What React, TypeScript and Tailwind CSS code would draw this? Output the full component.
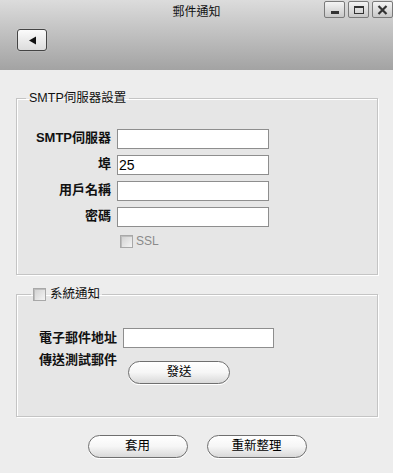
import React from "react";

const cjk = { fontFamily: '"Liberation Sans", "Noto Sans CJK TC", sans-serif' };

function Check() {
  return (
    <span className="inline-block w-[13px] h-[13px] border border-[#a8a8a8] bg-gradient-to-br from-[#d0d0d0] to-[#f4f4f4] shadow-[inset_1px_1px_0_#bdbdbd] shrink-0" />
  );
}

function Pill({ children, className = "" }: { children: React.ReactNode; className?: string }) {
  return (
    <button
      className={
        "h-[23px] w-[100px] rounded-full border border-[#6f6f6f] bg-gradient-to-b from-[#ffffff] via-[#f6f6f6] to-[#d9d9d9] text-[12.5px] leading-[21px] text-black shadow-[0_1px_0_#ffffff] " +
        className
      }
      style={cjk}
    >
      {children}
    </button>
  );
}

function Input({ value = "", w = "w-[152px]" }: { value?: string; w?: string }) {
  return (
    <div
      className={`${w} h-[20px] border border-[#8e8e8e] bg-white text-[14px] leading-[18px] pl-[1px] text-black`}
      style={cjk}
    >
      {value}
    </div>
  );
}

function WinBtn({ children }: { children: React.ReactNode }) {
  return (
    <div className="w-[21px] h-[17px] rounded-[2px] border border-[#7a7a7a] bg-gradient-to-b from-[#f4f4f4] to-[#c8c8c8] flex items-center justify-center">
      {children}
    </div>
  );
}

export default function App() {
  return (
    <div className="w-[393px] h-[473px] bg-[#ededed] overflow-hidden relative" style={cjk}>
      {/* header */}
      <div className="h-[70px] bg-gradient-to-b from-[#dcdcdc] to-[#a3a3a3] relative">
        <div className="text-center text-[12px] leading-[16px] pt-[4px] text-[#111]">郵件通知</div>
        <div className="absolute right-0 top-[1px] flex gap-[3px]">
          <WinBtn>
            <span className="block w-[8px] h-[3px] bg-[#333] mt-[6px]" />
          </WinBtn>
          <WinBtn>
            <span className="block w-[10px] h-[8px] border border-[#333] border-t-2" />
          </WinBtn>
          <WinBtn>
            <svg width="11" height="10" viewBox="0 0 11 10">
              <path d="M1.5 1 L9.5 9 M9.5 1 L1.5 9" stroke="#333" strokeWidth="2.2" />
            </svg>
          </WinBtn>
        </div>
        <div className="ml-[17px] mt-[9px] w-[30px] h-[22px] rounded-[3px] border border-[#444] bg-gradient-to-b from-[#fbfbfb] to-[#dcdcdc] flex items-center justify-center shadow-[0_0_1px_#fff]">
          <svg width="9" height="9" viewBox="0 0 9 9">
            <path d="M1 4.5 L8 0.5 L8 8.5 Z" fill="#111" />
          </svg>
        </div>
      </div>

      {/* body */}
      <div className="pl-[16px] pr-[15px] pt-[20px]">
        <fieldset className="h-[185px] border border-[#c4c4c4] bg-[#e6e6e6] shadow-[1px_1px_0_#ffffff,inset_1px_1px_0_#ffffff] px-0">
          <legend className="ml-[9px] px-[3px] text-[12.5px] leading-[16px] text-[#111]">SMTP伺服器設置</legend>
          <div className="pt-[23px] flex flex-col gap-[6px]">
            {[
              ["SMTP伺服器", ""],
              ["埠", "25"],
              ["用戶名稱", ""],
              ["密碼", ""],
            ].map(([l, v]) => (
              <div key={l} className="flex items-center">
                <div className="w-[94px] text-right font-bold text-[13px] leading-[16px] text-[#111] -mt-[3px]">{l}</div>
                <div className="ml-[6px]">
                  <Input value={v} />
                </div>
              </div>
            ))}
            <div className="flex items-center ml-[103px] mt-[1px] gap-[3px]">
              <Check />
              <span className="text-[12px] text-[#8a8a8a] leading-[14px]" style={{ fontFamily: '"Liberation Sans", sans-serif' }}>
                SSL
              </span>
            </div>
          </div>
        </fieldset>

        <fieldset className="mt-[11px] h-[131px] border border-[#c4c4c4] bg-[#e6e6e6] shadow-[1px_1px_0_#ffffff,inset_1px_1px_0_#ffffff] px-0">
          <legend className="ml-[14px] px-[2px] flex items-center gap-[4px] text-[12.5px] leading-[16px] text-[#111]">
            <Check />
            <span>系統通知</span>
          </legend>
          <div className="pt-[26px] pl-[22px]">
            <div className="flex items-center">
              <div className="w-[78px] font-bold text-[13px] leading-[16px] text-[#111] whitespace-nowrap">電子郵件地址</div>
              <div className="ml-[6px]">
                <Input w="w-[151px]" />
              </div>
            </div>
            <div className="flex items-start mt-[4px]">
              <div className="w-[78px] font-bold text-[13px] leading-[16px] text-[#111] whitespace-nowrap">傳送測試郵件</div>
              <Pill className="ml-[11px] mt-[9px] w-[102px]">發送</Pill>
            </div>
          </div>
        </fieldset>
      </div>

      <div className="flex justify-center gap-[19px] mt-[18px] pl-[1px]">
        <Pill>套用</Pill>
        <Pill>重新整理</Pill>
      </div>
    </div>
  );
}
